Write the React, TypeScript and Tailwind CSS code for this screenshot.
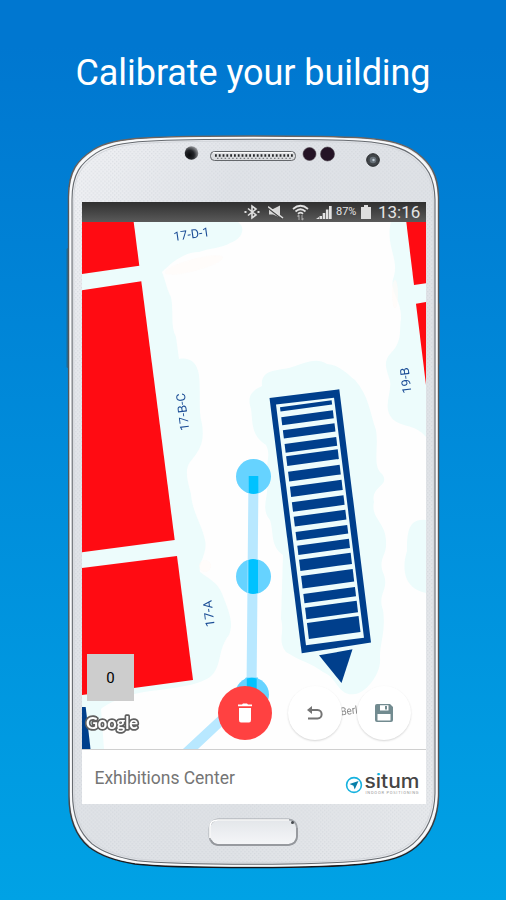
import React from "react";

// Stripes of the travelator: [top of the left edge, height]
const stripes: [number, number][] = [
  [407.3, 4.3], [417.3, 7.9], [430.3, 8.3], [444, 8.8], [456.3, 9.7], [471.7, 9.7],
  [486.7, 10.2], [502.3, 9.5], [516.7, 9.9], [532, 8.6], [545.7, 9.2], [559.7, 11.2],
  [576, 12.5], [594, 9.3], [607.7, 11.5], [623, 16],
];

function stripePoints(y: number, h: number) {
  const x = 280 + (y - 407.3) * 0.125;
  const s = h * 0.12;
  return `${x},${y} ${x + 51.6},${y - 7} ${x + 51.6 + s},${y - 7 + h} ${x + s},${y + h}`;
}

function PhoneShell() {
  const outline =
    "M68.5 197 C68.5 170 78 160 93 150 C105 142 124 139 145 138 C180 136 220 136 253 136 C300 136 340 136.500 364 138 C390 140 405 144 417 153 C430 163 438 174 438.500 197 V796 C438 818 430 835 416 847 C404 857 390 861 364 864 C330 867.500 290 867.500 253 867.500 C210 867.500 160 867 135 864 C110 860 98 854 89 847 C76 836 69 820 69 796 Z";
  return (
    <svg className="absolute inset-0" width="506" height="900" viewBox="0 0 506 900">
      <defs>
        <linearGradient id="body" x1="0" y1="0" x2="1" y2="1">
          <stop offset="0" stopColor="#f1f2f5" />
          <stop offset="0.25" stopColor="#e0e3e8" />
          <stop offset="0.7" stopColor="#dfe2e6" />
          <stop offset="1" stopColor="#e8eaed" />
        </linearGradient>
        <linearGradient id="rim" x1="0" y1="0" x2="0" y2="1">
          <stop offset="0" stopColor="#6b6461" />
          <stop offset="0.1" stopColor="#55585b" />
          <stop offset="0.9" stopColor="#505357" />
          <stop offset="1" stopColor="#15171a" />
        </linearGradient>
        <pattern id="dots" width="4" height="4" patternUnits="userSpaceOnUse">
          <rect width="1.4" height="1.4" fill="#c8cdd3" />
          <rect x="2" y="2" width="1.4" height="1.4" fill="#c8cdd3" />
        </pattern>
        <radialGradient id="sensor" cx="0.35" cy="0.65" r="0.7">
          <stop offset="0" stopColor="#08090b" />
          <stop offset="0.5" stopColor="#24262a" />
          <stop offset="1" stopColor="#9a9ca0" />
        </radialGradient>
        <linearGradient id="home" x1="0" y1="0" x2="0" y2="1">
          <stop offset="0" stopColor="#e3e6ea" />
          <stop offset="1" stopColor="#f5f6f8" />
        </linearGradient>
      </defs>
      <rect x="66.500" y="248" width="3" height="120" rx="1.500" fill="#1d6b96" />
      <rect x="437" y="303" width="2.500" height="62" rx="1" fill="#66757f" />
      <path d={outline} fill="url(#body)" stroke="url(#rim)" strokeWidth="1.500" />
      <g transform="translate(253.500 502) scale(.989 .9945) translate(-253.500 -502)">
        <path d={outline} fill="none" stroke="#f9fafb" strokeWidth="2" />
      </g>
      <g transform="translate(253.500 501.500) scale(.981 .991) translate(-253.500 -501.500)">
        <path d={outline} fill="url(#body)" stroke="#676b70" strokeWidth="1.100" />
      </g>
      <g transform="translate(253.500 501.500) scale(.972 .986) translate(-253.500 -501.500)">
        <path d={outline} fill="url(#dots)" fillOpacity=".45" stroke="#d2d5da" strokeWidth="1" />
      </g>
      <circle cx="191.500" cy="153" r="6.800" fill="url(#sensor)" />
      <rect x="210.500" y="151.500" width="85" height="9" rx="4" fill="#dadcdf" stroke="#64676b" />
      <path d="M213 152.700 H293" stroke="#fff" />
      <path d="M215 155.500 H293" stroke="#25272a" strokeWidth="2.600" strokeDasharray="1.800 2" />
      <path d="M217 158.300 H291" stroke="#77797d" strokeWidth="1.200" strokeDasharray="1.500 2.300" />
      <circle cx="309.500" cy="154" r="6.500" fill="#241325" stroke="#4d454e" strokeWidth=".6" />
      <circle cx="327.500" cy="154" r="7" fill="#241325" stroke="#4d454e" strokeWidth=".6" />
      <circle cx="373" cy="160" r="6.300" fill="#414549" stroke="#25282b" />
      <circle cx="373" cy="160" r="3.300" fill="#6a737b" />
      <circle cx="373.500" cy="160" r="1.200" fill="#c1ccd6" />
      <rect x="209.500" y="819.500" width="87.500" height="25.500" rx="8.500" fill="url(#home)" stroke="#a2a6ab" strokeWidth="1.800" />
      <path d="M210 838 V827 Q210 820 218 820 H289" fill="none" stroke="#fff" strokeWidth="1.600" />
      <path d="M211 840 Q213 845 220 845 H288 Q297 844 297 836 V828" fill="none" stroke="#94979c" strokeWidth="1.600" />
      <circle cx="292.500" cy="822.500" r="1.500" fill="#45494e" />
    </svg>
  );
}

function StatusBar() {
  return (
    <div className="flex h-5 items-center justify-end bg-gradient-to-b from-[#303030] to-[#5a5a5a] pr-[6px] text-[#e4e4e4]">
      <svg width="16" height="16" viewBox="0 0 16 16" fill="none" stroke="#e0e0e0" strokeWidth="1.600">
        <path d="M4 4.500 L12 11 L8 14 V2 L12 5 L4 11.500" />
        <path d="M0.500 8 H2.500 M13.500 8 H15.500" strokeWidth="2" />
      </svg>
      <svg className="ml-2" width="16" height="16" viewBox="0 0 16 16">
        <path d="M1 5 H5 L12 1.500 V13.500 L5 10.500 H1 Z" fill="#d8d8d8" />
        <path d="M0 4 L14 15" stroke="#484848" strokeWidth="1.500" />
        <path d="M0 2.500 L15 14" stroke="#e0e0e0" strokeWidth="1.500" />
      </svg>
      <svg className="ml-2" width="17" height="17" viewBox="0 0 17 17" fill="none" stroke="#e2e2e2" strokeWidth="1.700">
        <path d="M1 5 Q8.500 -1.500 16 5 M3.500 7.500 Q8.500 3 13.500 7.500 M6 9.800 Q8.500 7.500 11 9.800" />
        <path d="M7 16 V11 M5.500 12.500 L7 11 M10 11 V16 M11.500 14.500 L10 16" stroke="#a5a5a5" strokeWidth="1.100" />
      </svg>
      <svg className="ml-[7px]" width="16" height="15" viewBox="0 0 16 15" fill="#e2e2e2">
        <path d="M0 14 L3 12 V14 Z M3.500 11 H6 V14 H3.500 Z M6.700 8 H9.200 V14 H6.700 Z M9.900 4.500 H12.400 V14 H9.900 Z M13 1 H15.700 V14 H13 Z" />
      </svg>
      <span className="ml-[4px] w-[23px] whitespace-nowrap text-[11px] leading-5">87%</span>
      <svg className="ml-[2px]" width="10" height="14" viewBox="0 0 10 14" fill="#dedede">
        <path d="M0 2 H3 V0 H7 V2 H10 V14 H0 Z" />
      </svg>
      <span className="ml-[7px] w-[42px] whitespace-nowrap text-[17px] leading-5">13:16</span>
    </div>
  );
}

function FloorMap() {
  return (
    <svg className="block" width="344" height="527" viewBox="82 222 344 527">
      <rect x="82" y="222" width="344" height="527" fill="#fefefe" />
      <g fill="#edfcfc">
        <path d="M82 222 H238 C247 228 241 240 230 243 C222 248 210 248 199 252 C184 252 171 263 162 272 C166 282 167 290 171 297 C174 312 170 325 176 337 L179 359 C188 357 197 361 199 375 C201 392 198 410 202 424 C205 443 199 451 190 462 C184 470 188 483 191 494 C192 511 202 525 205 540 C208 553 198 563 200 572 C209 579 218 582 223 596 C229 612 234 623 229 635 C218 649 222 663 213 674 C205 684 180 687 160 690 C130 692 108 703 101 709 L104 749 H82 Z" />
        <path d="M391 222 H426 V437 C415 423 399 428 391 417 C383 406 392 392 390 381 C387 370 382 362 391 353 C403 341 399 329 401 319 C402 299 388 291 394 276 C399 259 385 244 391 222 Z" />
        <path d="M262 386 C260 368 280 371 292 367 C306 363 316 357 327 364 C340 365 347 374 355 380 C369 396 370 413 376 430 C379 449 372 466 382 474 C391 486 370 486 374 502 C370 518 387 523 386 543 C387 556 377 559 384 575 C389 590 377 594 383 610 C386 631 380 642 380 657 C382 675 364 694 355 694 C338 697 338 678 323 672 C311 663 300 661 286 652 C277 641 285 633 281 619 L283 555 C270 546 274 532 270 520 C260 508 269 497 267 484 C264 464 272 457 266 445 C251 435 253 424 251 409 C247 397 251 391 262 386 Z" />
        <path d="M426 520 C408 518 407 533 407 551 C401 570 405 589 426 593 Z" />
      </g>
      <g fill="#fffaf7" opacity=".65">
        <ellipse cx="194" cy="265" rx="30" ry="6" transform="rotate(-15 194 265)" />
        <ellipse cx="395" cy="294" rx="3" ry="14" />
        <ellipse cx="205" cy="566" rx="6" ry="6" />
      </g>
      <g fill="#ff0b12">
        <path d="M82 222 H133.700 L139.300 265.700 L82 274 Z" />
        <path d="M82 290.300 L141.300 281.300 L174.700 540 L82 552.300 Z" />
        <path d="M82 568 L177 556 L193 680 L82 695 Z" />
        <path d="M406.300 222 H426 V283.300 L414 285 Z" />
        <path d="M416 303.700 L426 302 V385 Z" />
      </g>
      <path d="M82 707 H85.700 L90.500 749 H82 Z" fill="#003f8c" />

      <path d="M269.500 398 L339.300 389.300 L371 642.500 L301.700 653.300 Z" fill="#003f8c" />
      <path d="M276 404.600 L334 397.700 L364 637.700 L306 645.200 Z" fill="#edfcfc" />
      <g fill="#003f8c">
        {stripes.map(([y, h]) => (
          <polygon key={y} points={stripePoints(y, h)} />
        ))}
        <path d="M319 655.300 L352.500 649.300 L341.500 683 Z" />
      </g>

      <g fill="#66d3ff">
        <circle cx="253.500" cy="476.500" r="17.500" />
        <circle cx="253.500" cy="576.500" r="17.500" />
        <circle cx="252" cy="694.500" r="17" />
      </g>
      <path d="M248.500 476 H258.500 L256.500 694 L198 749 H183 L246.500 690 Z" fill="#b8e8ff" />
      <g fill="#66d3ff">
        <path d="M246 677.500 H258 V712 H235.500 V690 Z" />
      </g>
      <g fill="#00c2ff">
        <path d="M248.500 476 H258.500 V493 Q253.500 495 248.500 493 Z" />
        <path d="M248.300 560 Q253 558 258 560 V593 Q253 595 248.300 593 Z" />
        <path d="M246.800 678.500 Q252 677 256.700 678.500 V697 H246.800 Z" />
      </g>

      <g fill="#1b4d96" fontFamily="Roboto, sans-serif" fontSize="12.500" textAnchor="middle">
        <text transform="translate(192 238.500) rotate(-8)" textLength="36" lengthAdjust="spacingAndGlyphs">17-D-1</text>
        <text transform="translate(187 411.500) rotate(-97)" textLength="38" lengthAdjust="spacingAndGlyphs">17-B-C</text>
        <text transform="translate(213 613) rotate(-97)" textLength="27" lengthAdjust="spacingAndGlyphs">17-A</text>
        <text transform="translate(410 380) rotate(-97)" textLength="26" lengthAdjust="spacingAndGlyphs">19-B</text>
      </g>
      <text x="341" y="715.500" transform="rotate(-7 341 715.500)" fill="#858585" fontFamily="Roboto, sans-serif" fontSize="11" textLength="17" lengthAdjust="spacingAndGlyphs">Berl</text>
      <text x="86" y="729" fill="#fff" stroke="#606060" strokeWidth="3.600" strokeLinejoin="round" paintOrder="stroke" fontFamily="Lato, sans-serif" fontWeight="700" fontSize="17.500" textLength="52" lengthAdjust="spacingAndGlyphs">Google</text>
    </svg>
  );
}

function MapActions() {
  const round = "flex size-[54px] items-center justify-center rounded-full";
  return (
    <div className="absolute bottom-[9px] left-[136px] flex gap-[15.5px]">
      <button className={`${round} bg-[#ff4141]`}>
        <svg width="16" height="20" viewBox="0 0 16 20" fill="#fff">
          <path d="M1 1.500 H5 L6 .5 H10 L11 1.500 H15 V3.300 H1 Z M2 5 H14 V17 Q14 19.500 12 19.500 H4 Q2 19.500 2 17 Z" />
        </svg>
      </button>
      <button className={`${round} bg-white shadow-[0_1px_2px_rgba(0,0,0,0.16)]`}>
        <svg width="16" height="14" viewBox="0 0 16 14">
          <path d="M3 4 H10.500 C16 4 16 12.500 10.500 12.500 H1" fill="none" stroke="#747474" strokeWidth="2" />
          <path d="M0 4 L5 0 V8 Z" fill="#747474" />
        </svg>
      </button>
      <button className={`${round} bg-white shadow-[0_1px_2px_rgba(0,0,0,0.16)]`}>
        <svg width="18" height="18" viewBox="0 0 18 18">
          <path d="M2 0 H15 L18 3 V16 Q18 18 16 18 H2 Q0 18 0 16 V2 Q0 0 2 0 Z" fill="#728b90" />
          <path d="M5 1.200 H13.500 V6.500 H5 Z M2.500 10 H15.500 V16.500 H2.500 Z" fill="#fff" />
          <rect x="10" y="2" width="2" height="3.500" fill="#728b90" />
        </svg>
      </button>
    </div>
  );
}

function SitumLogo() {
  return (
    <svg width="76" height="28" viewBox="0 0 76 28">
      <defs>
        <linearGradient id="dotted-i" gradientUnits="userSpaceOnUse" x1="0" y1="0" x2="0" y2="28">
          <stop offset="0.27" stopColor="#16b2df" />
          <stop offset="0.27" stopColor="#454545" />
        </linearGradient>
      </defs>
      <circle cx="9" cy="17" r="7.400" fill="none" stroke="#16b2df" strokeWidth="1.600" />
      <path d="M13.500 13 L4.500 16 L8.500 17.700 L9.700 21.500 Z" fill="#087ea8" />
      <text x="19.500" y="19.500" fill="#454545" fontFamily="Inter, sans-serif" fontWeight="500" fontSize="18.500" textLength="55" lengthAdjust="spacingAndGlyphs">
        s<tspan fill="url(#dotted-i)">i</tspan>tum
      </text>
      <text x="20.500" y="25.500" fill="#999" fontFamily="Roboto, sans-serif" fontSize="4" textLength="53">INDOOR POSITIONING</text>
    </svg>
  );
}

export default function App() {
  return (
    <main className="relative h-[900px] w-[506px] overflow-hidden bg-gradient-to-b from-[#0077d0] from-5% to-[#00a2e5] font-['Roboto',sans-serif]">
      <PhoneShell />
      <div className="relative flex flex-col">
        <h1 className="flex h-[202px] justify-center whitespace-nowrap pt-[49px] text-[36px] font-normal leading-[48px] tracking-[-0.07px] text-white">
          Calibrate your building
        </h1>
        <section className="ml-[82px] flex h-[602px] w-[344px] flex-col bg-white">
          <StatusBar />
          <div className="relative h-[527px]">
            <FloorMap />
            <div className="absolute left-[5px] top-[432px] flex size-[47px] items-center justify-center bg-[#cdcdcd] pt-px text-[15px] text-black">0</div>
            <MapActions />
          </div>
          <footer className="flex h-[55px] items-center justify-between border-t-[1.5px] border-[#cfcfcf] pl-[12.5px] pr-[5px]">
            <span className="pt-[2px] text-[17.5px] tracking-[-0.03px] text-[#757575]">Exhibitions Center</span>
            <div className="mt-[9px]"><SitumLogo /></div>
          </footer>
        </section>
      </div>
    </main>
  );
}
